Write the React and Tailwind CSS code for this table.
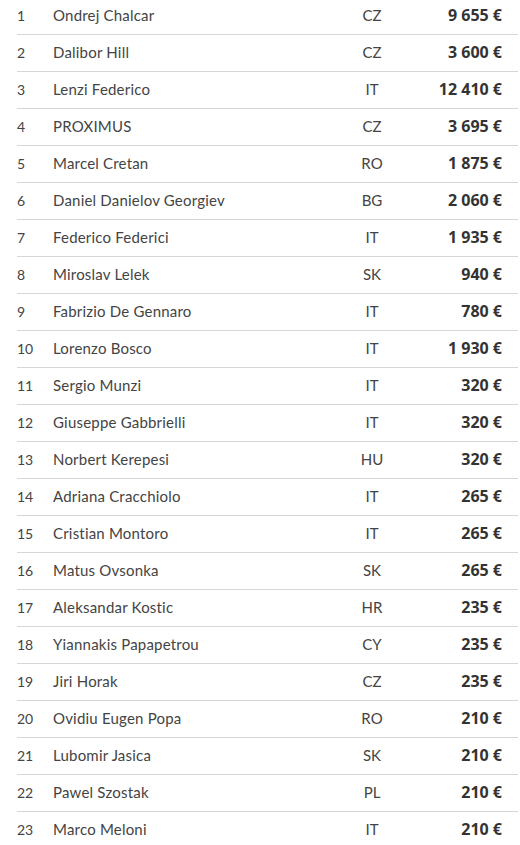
import React from "react";

const rows = [
  ["Ondrej Chalcar", "CZ", "9 655 €"],
  ["Dalibor Hill", "CZ", "3 600 €"],
  ["Lenzi Federico", "IT", "12 410 €"],
  ["PROXIMUS", "CZ", "3 695 €"],
  ["Marcel Cretan", "RO", "1 875 €"],
  ["Daniel Danielov Georgiev", "BG", "2 060 €"],
  ["Federico Federici", "IT", "1 935 €"],
  ["Miroslav Lelek", "SK", "940 €"],
  ["Fabrizio De Gennaro", "IT", "780 €"],
  ["Lorenzo Bosco", "IT", "1 930 €"],
  ["Sergio Munzi", "IT", "320 €"],
  ["Giuseppe Gabbrielli", "IT", "320 €"],
  ["Norbert Kerepesi", "HU", "320 €"],
  ["Adriana Cracchiolo", "IT", "265 €"],
  ["Cristian Montoro", "IT", "265 €"],
  ["Matus Ovsonka", "SK", "265 €"],
  ["Aleksandar Kostic", "HR", "235 €"],
  ["Yiannakis Papapetrou", "CY", "235 €"],
  ["Jiri Horak", "CZ", "235 €"],
  ["Ovidiu Eugen Popa", "RO", "210 €"],
  ["Lubomir Jasica", "SK", "210 €"],
  ["Pawel Szostak", "PL", "210 €"],
  ["Marco Meloni", "IT", "210 €"],
];

const App = () => {
  return (
    <div className="bg-white min-h-screen overflow-hidden">
      <div className="ml-[17px] mr-[2px] -mt-[2px]">
        {rows.map(([name, country, amount], i) => (
          <div
            key={i}
            className="flex items-center h-[37px] pb-[2px] border-b border-[#d6d6d6] text-[#444]"
          >
            <span className="w-[36px] text-[14px] font-['Lato',sans-serif]">{i + 1}</span>
            <span className="flex-1 text-[15px] tracking-[0.2px] font-['Lato',sans-serif]">{name}</span>
            <span className="w-[60px] text-center text-[15px] font-['Lato',sans-serif]">{country}</span>
            <span className="w-[116px] pr-[16px] text-right text-[16px] font-bold text-[#333] font-['Open_Sans',sans-serif]">
              {amount}
            </span>
          </div>
        ))}
      </div>
    </div>
  );
};

export default App;
